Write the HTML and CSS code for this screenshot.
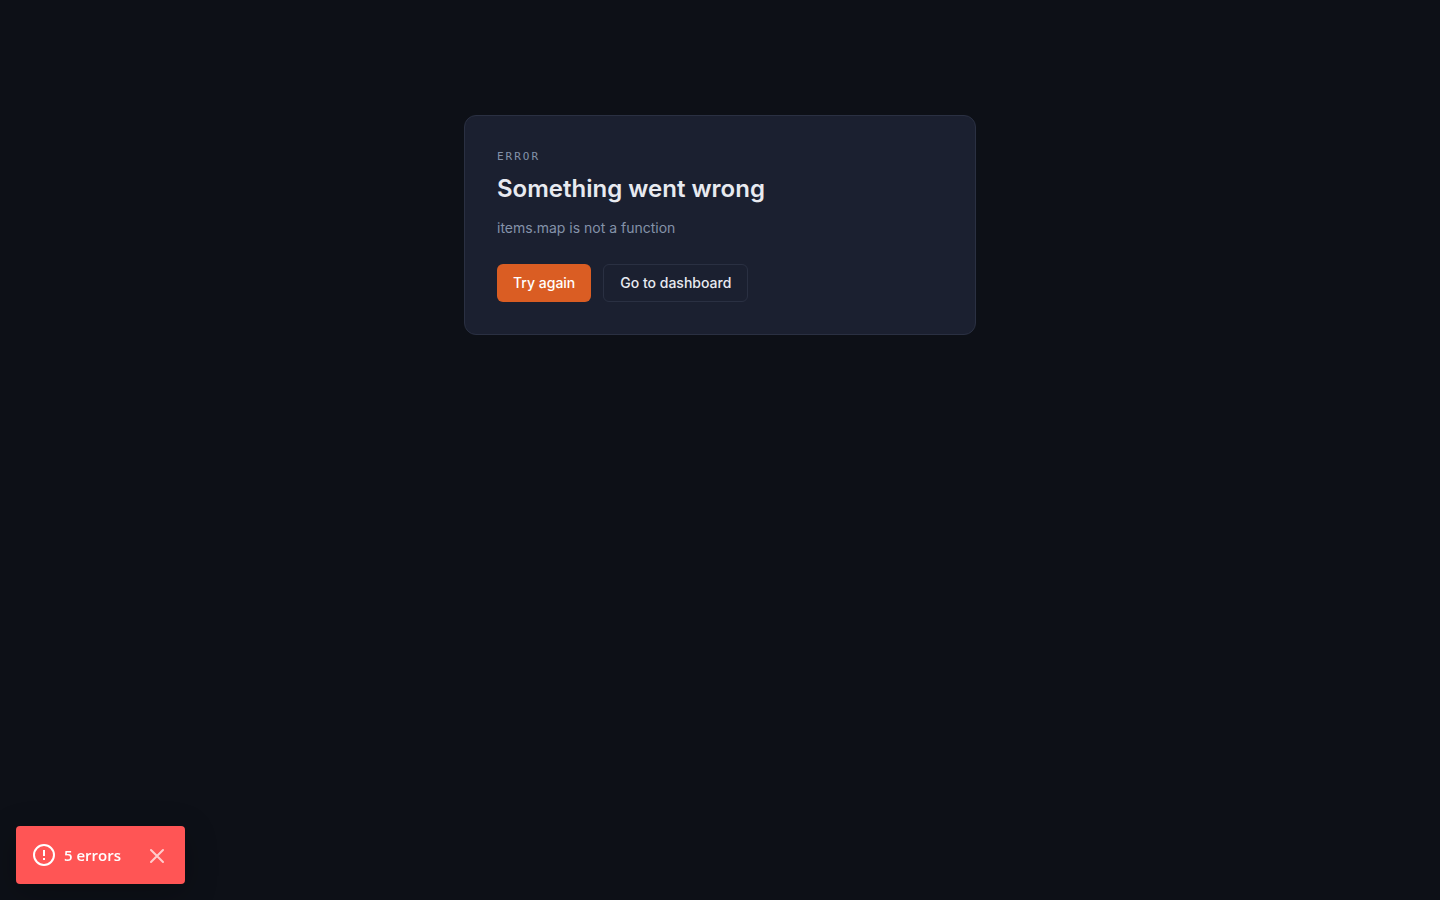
FILE: index.html
```html
<!DOCTYPE html>
<html lang="en">
<head>
<meta charset="utf-8">
<title>Error</title>
<link rel="stylesheet" href="styles.css">
</head>
<body>
<main class="page">
  <section class="card">
    <p class="eyebrow">Error</p>
    <h1 class="title">Something went wrong</h1>
    <p class="message">items.map is not a function</p>
    <div class="actions">
      <button class="btn btn-primary" type="button">Try again</button>
      <a class="btn btn-secondary" href="#">Go to dashboard</a>
    </div>
  </section>
</main>
<div class="toast" role="status">
  <button class="toast-open" type="button">
    <svg class="toast-icon" viewBox="0 0 24 24" fill="none" stroke="currentColor" stroke-width="2" aria-hidden="true"><circle cx="12" cy="12" r="10"/><path d="M12 7v6M12 15v2"/></svg>
    <span>5 errors</span>
  </button>
  <button class="toast-close" type="button" aria-label="Hide errors">
    <svg class="toast-icon" viewBox="0 0 24 24" fill="none" stroke="currentColor" stroke-width="2" stroke-linecap="round" aria-hidden="true"><path d="M18 7 6 19M6 7l12 12"/></svg>
  </button>
</div>
</body>
</html>
```
FILE: styles.css
```css
* { box-sizing: border-box; }
body { margin: 0; min-height: 100vh; background: #0d1017; color: #e8eaf0; font-family: Inter, sans-serif; }
.page { padding: 115px 24px 48px; }
.card { max-width: 512px; margin: 0 auto; padding: 32px; background: #1b2030; border: 1px solid #2a3042; border-radius: 12px; }
.eyebrow { margin: 0 0 8px; font: 11px/17px "DejaVu Sans Mono", monospace; letter-spacing: 2px; text-transform: uppercase; color: #8492a9; }
.title { margin: 0 0 11px; font-size: 24px; line-height: 32px; font-weight: 600; }
.message { margin: 0 0 24px; font-size: 14px; line-height: 24px; color: #8492a9; }
.actions { display: flex; gap: 12px; }
.btn { display: inline-flex; align-items: center; padding: 8px 16px; border: 0; border-radius: 6px; font: 500 14px/20px Inter, sans-serif; color: inherit; text-decoration: none; cursor: pointer; }
.btn-primary { background: #da5d23; color: #fff; }
.btn-secondary { border: 1px solid #2a3042; }
.toast { position: fixed; left: 16px; bottom: 16px; display: flex; align-items: center; gap: 24px; padding: 16px; border-radius: 4px; background: #ff5555; color: #fff; box-shadow: 0 8px 32px rgba(0,0,0,.25); }
.toast button { display: flex; align-items: center; gap: 8px; padding: 0; border: 0; background: none; color: inherit; font: 600 15px/26px "Open Sans", sans-serif; cursor: pointer; }
.toast-icon { width: 24px; height: 24px; }
.toast .toast-close { opacity: .7; }
```
